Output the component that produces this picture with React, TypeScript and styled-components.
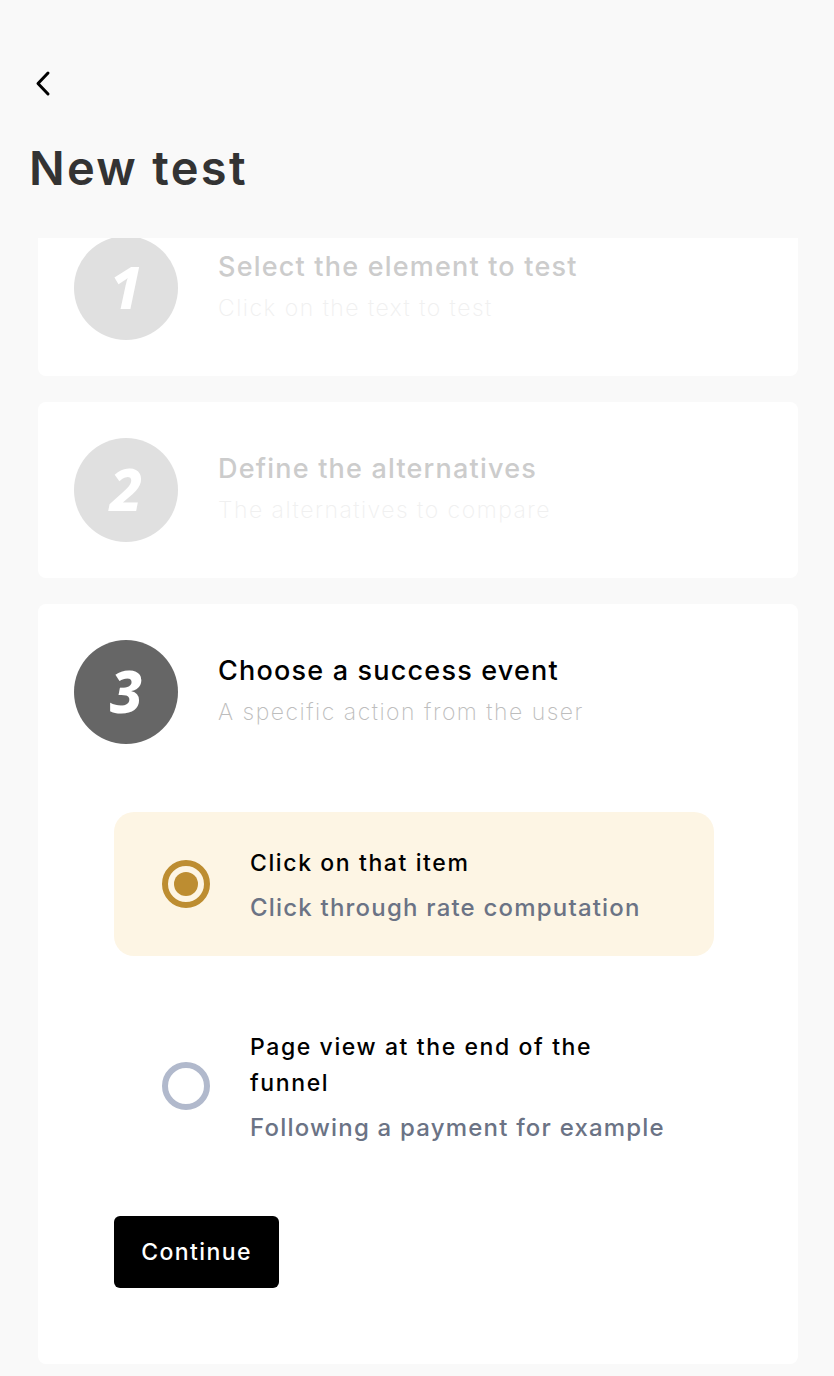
import React from "react";
import styled, { createGlobalStyle } from "styled-components";

const Global = createGlobalStyle`
  html, body { margin: 0; padding: 0; background: #f9f9f9; }
  body { font-family: Inter, "Noto Sans", sans-serif; color: #000; }
  * { box-sizing: border-box; }
`;

const Page = styled.div`
  width: 834px;
  height: 1376px;
  overflow: hidden;
  display: flex;
  flex-direction: column;
`;

const TopBar = styled.div`
  height: 122px;
  padding: 68px 0 0 32px;
`;

const BackButton = styled.button`
  background: none;
  border: none;
  padding: 0;
  width: 24px;
  height: 32px;
  cursor: pointer;
  display: flex;
  align-items: center;
  justify-content: center;
`;

const Heading = styled.h1`
  margin: 0;
  padding: 0 0 0 29px;
  font-size: 47px;
  font-weight: 600;
  color: #333;
  line-height: 92px;
  height: 116px;
  letter-spacing: 2.3px;
`;

const Viewport = styled.div`
  flex: 1;
  overflow: hidden;
  padding: 0 36px 0 38px;
`;

const Steps = styled.div`
  display: flex;
  flex-direction: column;
  gap: 26px;
  margin-top: -38px;
`;

const Card = styled.section`
  background: #fff;
  border-radius: 8px;
  padding: 36px;
  display: flex;
  flex-direction: column;
`;

const StepHeader = styled.div`
  display: flex;
  align-items: center;
  gap: 40px;
`;

const Badge = styled.div<{ $active: boolean }>`
  width: 104px;
  height: 104px;
  border-radius: 50%;
  flex: none;
  background: ${(p) => (p.$active ? "#666666" : "#e0e0e0")};
  color: #fff;
  display: flex;
  align-items: center;
  justify-content: center;
  font-family: "Noto Sans", sans-serif;
  font-weight: 800;
  font-style: italic;
  font-size: 58px;
  line-height: 1;
  padding-bottom: 2px;
`;

const StepText = styled.div`
  display: flex;
  flex-direction: column;
  gap: 8px;
  margin-top: -4px;
`;

const StepTitle = styled.div<{ $active: boolean }>`
  font-size: 27px;
  font-weight: 500;
  line-height: 36px;
  color: ${(p) => (p.$active ? "#000" : "#cccccc")};
  letter-spacing: 1.2px;
`;

const StepSub = styled.div<{ $active: boolean }>`
  font-size: 23px;
  font-weight: 200;
  line-height: 30px;
  color: ${(p) => (p.$active ? "#bdbdbd" : "#f0f0f0")};
  letter-spacing: 1.5px;
`;

const Options = styled.div`
  margin: 68px 0 0 40px;
  width: 600px;
  display: flex;
  flex-direction: column;
  gap: 40px;
`;

const Option = styled.label<{ $selected: boolean }>`
  display: flex;
  align-items: center;
  gap: 40px;
  padding: 33px 48px;
  border-radius: 20px;
  background: ${(p) => (p.$selected ? "#fdf5e4" : "transparent")};
  cursor: pointer;
`;

const Radio = styled.span<{ $selected: boolean }>`
  width: 48px;
  height: 48px;
  border-radius: 50%;
  flex: none;
  border: 6px solid ${(p) => (p.$selected ? "#bd8d31" : "#b1b9cc")};
  display: flex;
  align-items: center;
  justify-content: center;
  &::after {
    content: "";
    display: ${(p) => (p.$selected ? "block" : "none")};
    width: 24px;
    height: 24px;
    border-radius: 50%;
    background: #bd8d31;
  }
`;

const OptionText = styled.div`
  display: flex;
  flex-direction: column;
  gap: 12px;
`;

const OptionTitle = styled.div`
  font-size: 23px;
  font-weight: 500;
  line-height: 36px;
  color: #000;
  letter-spacing: 1.6px;
  max-width: 380px;
`;

const OptionSub = styled.div`
  font-size: 24px;
  font-weight: 500;
  line-height: 30px;
  color: #6b7385;
  letter-spacing: 1.2px;
`;

const ContinueButton = styled.button`
  margin: 40px 0 40px 40px;
  align-self: flex-start;
  height: 72px;
  width: 165px;
  padding: 0;
  border: none;
  border-radius: 6px;
  background: #000;
  color: #fff;
  font-family: Inter, sans-serif;
  font-size: 23px;
  font-weight: 500;
  letter-spacing: 1.4px;
  cursor: pointer;
`;

const steps = [
  { n: "1", title: "Select the element to test", sub: "Click on the text to test" },
  { n: "2", title: "Define the alternatives", sub: "The alternatives to compare" },
];

export default function App() {
  return (
    <Page>
      <Global />
      <TopBar>
        <BackButton aria-label="Back">
          <svg width="20" height="28" viewBox="0 0 20 28" fill="none">
            <polyline points="14,3 4,13.5 14,24" stroke="#000" strokeWidth="3" strokeLinecap="round" strokeLinejoin="round" />
          </svg>
        </BackButton>
      </TopBar>
      <Heading>New test</Heading>
      <Viewport>
        <Steps>
          {steps.map((s) => (
            <Card key={s.n}>
              <StepHeader>
                <Badge $active={false}>{s.n}</Badge>
                <StepText>
                  <StepTitle $active={false}>{s.title}</StepTitle>
                  <StepSub $active={false}>{s.sub}</StepSub>
                </StepText>
              </StepHeader>
            </Card>
          ))}
          <Card>
            <StepHeader>
              <Badge $active>3</Badge>
              <StepText>
                <StepTitle $active>Choose a success event</StepTitle>
                <StepSub $active>A specific action from the user</StepSub>
              </StepText>
            </StepHeader>
            <Options>
              <Option $selected>
                <Radio $selected />
                <OptionText>
                  <OptionTitle>Click on that item</OptionTitle>
                  <OptionSub>Click through rate computation</OptionSub>
                </OptionText>
              </Option>
              <Option $selected={false}>
                <Radio $selected={false} />
                <OptionText>
                  <OptionTitle>Page view at the end of the funnel</OptionTitle>
                  <OptionSub>Following a payment for example</OptionSub>
                </OptionText>
              </Option>
            </Options>
            <ContinueButton>Continue</ContinueButton>
          </Card>
        </Steps>
      </Viewport>
    </Page>
  );
}
